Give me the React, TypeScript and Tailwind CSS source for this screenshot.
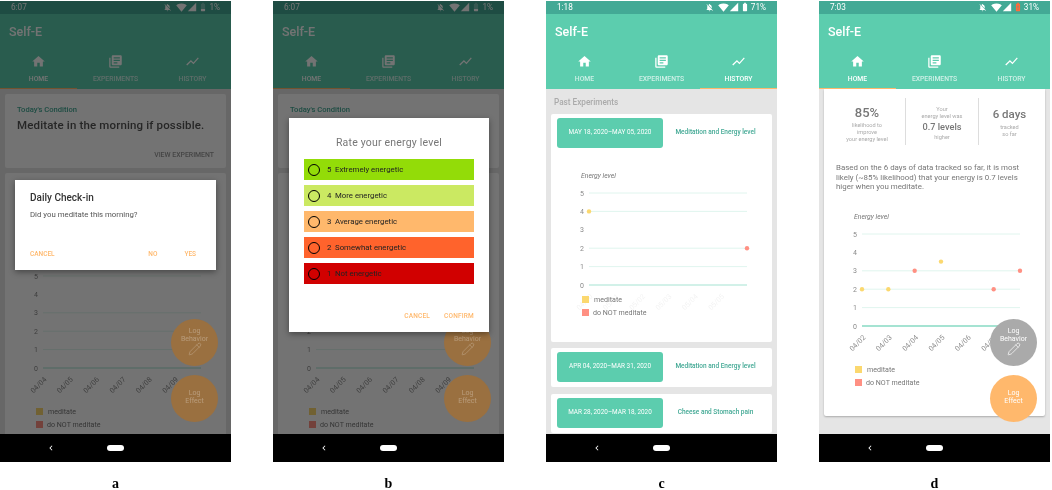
import React from "react";
import {
  MdHome,
  MdLibraryBooks,
  MdShowChart,
  MdNotificationsOff,
  MdSignalWifi4Bar,
  MdSignalCellular4Bar,
  MdBatteryFull,
  MdBattery20,
  MdBatteryAlert,
  MdChevronLeft,
} from "react-icons/md";
import { Pencil } from "lucide-react";

type Pt = [number, number, "y" | "r"];

function Chart({
  lines,
  points = [],
  labels,
  height = 151,
  labelClass = "fill-[#8a8a8a]",
  thick = false,
  title = true,
}: {
  lines: number[];
  points?: Pt[];
  labels: string[];
  height?: number;
  labelClass?: string;
  thick?: boolean;
  title?: boolean;
}) {
  const x0 = 38;
  const x1 = 196;
  const top = 27;
  const step = 18.4;
  const yOf = (v: number) => top + (5 - v) * step;
  const xOf = (i: number) => x0 + i * ((x1 - x0) / 6);
  return (
    <svg width={221} height={height} className="block overflow-visible">
      {title && (
        <text x={30} y={12} fontSize={6.8} fontStyle="italic" fill="#777">
          Energy level
        </text>
      )}
      {[5, 4, 3, 2, 1, 0].map((v) => (
        <text key={v} x={33} y={yOf(v) + 2.5} fontSize={7} textAnchor="end" fill="#8a8a8a">
          {v}
        </text>
      ))}
      {lines.map((v) => (
        <line
          key={v}
          x1={x0}
          x2={x1}
          y1={yOf(v)}
          y2={yOf(v)}
          stroke={v === 0 ? "#a5e3d2" : "#d8f2ea"}
          strokeWidth={v === 0 ? (thick ? 2 : 1) : 0.8}
        />
      ))}
      {labels.map((l, i) => (
        <text
          key={l}
          x={xOf(i) + 4}
          y={yOf(0) + 12}
          fontSize={7.2}
          textAnchor="end"
          className={labelClass}
          transform={`rotate(-45 ${xOf(i) + 4} ${yOf(0) + 12})`}
        >
          {l}
        </text>
      ))}
      {points.map(([i, v, c], k) => (
        <circle key={k} cx={xOf(i)} cy={yOf(v)} r={2.2} fill={c === "y" ? "#fbd86f" : "#ff9083"} />
      ))}
    </svg>
  );
}

function Legend({ className = "" }: { className?: string }) {
  return (
    <div className={`flex flex-col text-[7.1px] leading-[13px] text-[#777] ${className}`}>
      <div className="flex items-center gap-[5px] pl-[31px]">
        <span className="w-[7px] h-[7px] bg-[#fbd86f]" />
        <span>meditate</span>
      </div>
      <div className="flex items-center gap-[4px] pl-[31px]">
        <span className="w-[7px] h-[7px] bg-[#ff9083]" />
        <span>do NOT meditate</span>
      </div>
    </div>
  );
}

function Fabs({ variant }: { variant: "dim" | "grey" }) {
  const dim = variant === "dim";
  const text = dim ? "text-white/30" : "text-white";
  return (
    <>
      <div
        className={`absolute left-[171px] top-[318px] w-[47px] h-[47px] rounded-full flex flex-col items-center pt-[9px] text-[7px] leading-[7.5px] text-center ${text} ${
          dim ? "bg-[#9a7040]" : "bg-[#aaaaaa]"
        }`}
      >
        <span>Log</span>
        <span>Behavior</span>
        <Pencil size={14} strokeWidth={1.2} className="-mt-[1px]" />
      </div>
      <div
        className={`absolute left-[171px] top-[374px] w-[47px] h-[47px] rounded-full flex flex-col items-center justify-center pb-[2px] text-[7px] leading-[7.5px] text-center ${text} ${
          dim ? "bg-[#9a7040]" : "bg-[#ffb86c]"
        }`}
      >
        <span>Log</span>
        <span>Effect</span>
      </div>
    </>
  );
}

function Phone({
  time,
  battery,
  BatteryIcon,
  batteryClass = "",
  active,
  body,
  overlay,
  fabs,
}: {
  time: string;
  battery: string;
  BatteryIcon: React.ComponentType<{ size?: number; className?: string }>;
  batteryClass?: string;
  active: number;
  body: React.ReactNode;
  overlay?: React.ReactNode;
  fabs?: React.ReactNode;
}) {
  const tabs: [string, React.ComponentType<{ size?: number }>][] = [
    ["HOME", MdHome],
    ["EXPERIMENTS", MdLibraryBooks],
    ["HISTORY", MdShowChart],
  ];
  return (
    <div className="relative shrink-0 w-[231px] h-[461px] flex flex-col overflow-hidden bg-[#e5e5e5]">
      <div className="h-[13px] shrink-0 bg-[#43a995] flex items-center justify-between pl-[11px] pr-[11px] text-white text-[8.2px]">
        <span>{time}</span>
        <div className="flex items-center">
          <MdNotificationsOff size={9} className="mr-[4px]" />
          <MdSignalWifi4Bar size={11} />
          <MdSignalCellular4Bar size={10} className="mr-[1px]" />
          <BatteryIcon size={10} className={batteryClass} />
          <span className="ml-[1px]">{battery}</span>
        </div>
      </div>
      <div className="h-[34px] shrink-0 bg-[#5ccdae] flex items-center pl-[9px] pt-[3px] text-white text-[12.5px] font-medium">
        Self-E
      </div>
      <div className="h-[41px] shrink-0 bg-[#5ccdae] grid grid-cols-3">
        {tabs.map(([t, Icon], i) => (
          <div
            key={t}
            className={`flex flex-col items-center justify-start pt-[6px] border-b-[1px] text-[6.8px] font-medium ${
              i === active ? "border-[#ffb86c] text-white" : "border-transparent text-white/70"
            }`}
          >
            <span className="text-white h-[14px] flex items-center">
              <Icon size={15} />
            </span>
            <span className="mt-[6px] leading-[10px]">{t}</span>
          </div>
        ))}
      </div>
      <div className="h-[345px] shrink-0 overflow-hidden">{body}</div>
      <div className="h-[28px] shrink-0 bg-black flex items-center text-white">
        <MdChevronLeft size={10} className="ml-[46px]" />
        <span className="ml-[51px] w-[17px] h-[6px] rounded-full bg-white" />
      </div>
      {overlay && <div className="absolute inset-x-0 top-0 h-[433px] bg-black/55" />}
      {fabs}
      {overlay}
    </div>
  );
}

function HomeBody({ dates }: { dates: string[] }) {
  return (
    <div className="px-[5px] pt-[5px] flex flex-col gap-[5px]">
      <div className="h-[74px] shrink-0 bg-white rounded-[2px] pl-[12px] pr-[12px] pt-[11px] relative flex flex-col">
        <span className="text-[7.6px] leading-[10px] text-[#43a995] font-medium">Today's Condition</span>
        <span className="text-[11.5px] leading-[16px] mt-[2px] font-medium text-[#555] whitespace-nowrap tracking-[0.15px]">
          Meditate in the morning if possible.
        </span>
        <span className="mt-[17px] self-end text-[6.9px] text-[#999] font-medium leading-[10px]">VIEW EXPERIMENT</span>
      </div>
      <div className="h-[270px] shrink-0 bg-white rounded-[2px] pt-[76px]">
        <Chart lines={[5, 3, 2, 1, 0]} labels={dates} title={false} />
        <Legend className="mt-[5px]" />
      </div>
    </div>
  );
}

const Pill = ({ date, name }: { date: string; name: string }) => (
  <div className="flex items-center">
    <div className="w-[106px] h-[30px] ml-[6px] rounded-[3px] bg-[#5ccdae] text-white text-[6.4px] flex items-center justify-center whitespace-nowrap">
      {date}
    </div>
    <div className="flex-1 pr-[4px] text-center text-[6.5px] font-medium text-[#43a995] whitespace-nowrap">{name}</div>
  </div>
);

function HistoryBody() {
  return (
    <div className="px-[5px] flex flex-col">
      <div className="h-[25px] shrink-0 flex items-center pl-[3px] pt-[2px] text-[8.2px] font-medium text-[#aaa]">Past Experiments</div>
      <div className="h-[228px] shrink-0 bg-white rounded-[2px] pt-[4px]">
        <Pill date="MAY 18, 2020–MAY 05, 2020" name="Meditation and Energy level" />
        <div className="mt-[18px]">
          <Chart
            lines={[5, 4, 2, 1, 0]}
            points={[
              [0, 4, "y"],
              [6, 2, "r"],
            ]}
            labels={["04/30", "05/01", "05/02", "05/03", "05/04", "05/05"]}
            height={126}
            labelClass="fill-[#f3f3f3]"
          />
        </div>
        <Legend className="mt-[1px]" />
      </div>
      <div className="h-[39px] shrink-0 mt-[6px] bg-white rounded-[2px] pt-[4px]">
        <Pill date="APR 04, 2020–MAR 31, 2020" name="Meditation and Energy level" />
      </div>
      <div className="h-[39px] shrink-0 mt-[7px] bg-white rounded-[2px] pt-[4px]">
        <Pill date="MAR 28, 2020–MAR 18, 2020" name="Cheese and Stomach pain" />
      </div>
    </div>
  );
}

function DetailBody() {
  return (
    <div className="px-[5px]">
      <div className="h-[327px] bg-white rounded-b-[2px] shadow-[0_1px_2px_rgba(0,0,0,0.25)] text-[#777]">
        <div className="grid grid-cols-[81px_74px_1fr] pt-[9px] h-[66px] text-center text-[5.6px] leading-[7px] text-[#aaa]">
          <div className="flex flex-col items-center pt-[7px] pl-[5px]">
            <span className="text-[13px] leading-[16px] text-[#777] font-medium mb-[1px]">85%</span>
            <span>likelihood to</span>
            <span>improve</span>
            <span>your energy level</span>
          </div>
          <div className="flex flex-col items-center border-x border-[#ddd] pt-[8px] h-[47px]">
            <span>Your</span>
            <span>energy level was</span>
            <span className="text-[9.2px] leading-[12px] font-medium text-[#777] my-[1px]">0.7 levels</span>
            <span>higher</span>
          </div>
          <div className="flex flex-col items-center pt-[8px] pr-[5px]">
            <span className="text-[11.5px] leading-[16px] text-[#777] font-medium mb-[2px]">6 days</span>
            <span>tracked</span>
            <span>so far</span>
          </div>
        </div>
        <p className="pl-[12px] text-[7.9px] leading-[9.5px] text-[#777] whitespace-nowrap mt-[8px]">
          Based on the 6 days of data tracked so far, it is most
          <br />
          likely (~85% likelihood) that your energy is 0.7 levels
          <br />
          higer when you meditate.
        </p>
        <div className="mt-[15px]">
          <Chart
            lines={[5, 3, 2, 1, 0]}
            thick
            points={[
              [0, 2, "y"],
              [1, 2, "y"],
              [2, 3, "r"],
              [3, 3.5, "y"],
              [5, 2, "r"],
              [6, 3, "r"],
            ]}
            labels={["04/02", "04/03", "04/04", "04/05", "04/06", "04/07"]}
          />
        </div>
        <Legend className="mt-[5px]" />
      </div>
    </div>
  );
}

function CheckIn() {
  return (
    <div className="absolute left-[15px] top-[179px] w-[201px] h-[90px] bg-white shadow-[0_2px_6px_rgba(0,0,0,0.4)] pl-[15px] pr-[20px] pt-[11px] flex flex-col">
      <span className="text-[10px] leading-[13px] font-medium text-[#333]">Daily Check-in</span>
      <span className="text-[7.8px] leading-[10px] mt-[6px] text-[#555]">Did you meditate this morning?</span>
      <div className="mt-[30px] flex text-[6.5px] font-medium text-[#ffb86c]">
        <span>CANCEL</span>
        <span className="ml-auto">NO</span>
        <span className="ml-[27px]">YES</span>
      </div>
    </div>
  );
}

function Rate() {
  const opts: [string, string, string][] = [
    ["5", "Extremely energetic", "bg-[#93dc08]"],
    ["4", "More energetic", "bg-[#cbe962]"],
    ["3", "Average energetic", "bg-[#ffb86c]"],
    ["2", "Somewhat energetic", "bg-[#ff632c]"],
    ["1", "Not energetic", "bg-[#d10000]"],
  ];
  return (
    <div className="absolute left-[16px] top-[117px] w-[200px] h-[214px] bg-white shadow-[0_2px_6px_rgba(0,0,0,0.4)] px-[15px] pt-[18px] flex flex-col">
      <div className="text-center text-[10.5px] leading-[14px] text-[#777] tracking-[0.2px]">Rate your energy level</div>
      <div className="mt-[9px] flex flex-col gap-[5px]">
        {opts.map(([n, t, c]) => (
          <div key={n} className={`h-[21px] flex items-center pl-[4px] text-[7.8px] text-[#222] ${c}`}>
            <span className="w-[12px] h-[12px] rounded-full border border-black" />
            <span className="ml-[7px] w-[8px]">{n}</span>
            <span>{t}</span>
          </div>
        ))}
      </div>
      <div className="mt-[28px] flex justify-end text-[6.5px] font-medium text-[#ffb86c] tracking-[0.2px]">
        <span>CANCEL</span>
        <span className="ml-[14px]">CONFIRM</span>
      </div>
    </div>
  );
}

export default function App() {
  const dates = ["04/04", "04/05", "04/06", "04/07", "04/08", "04/09"];
  const screens = [
    {
      cap: "a",
      el: (
        <Phone time="6:07" battery="1%" BatteryIcon={MdBattery20} active={0} body={<HomeBody dates={dates} />} fabs={<Fabs variant="dim" />} overlay={<CheckIn />} />
      ),
    },
    {
      cap: "b",
      el: (
        <Phone time="6:07" battery="1%" BatteryIcon={MdBattery20} active={0} body={<HomeBody dates={dates} />} fabs={<Fabs variant="dim" />} overlay={<Rate />} />
      ),
    },
    {
      cap: "c",
      el: <Phone time="1:18" battery="71%" BatteryIcon={MdBatteryFull} active={2} body={<HistoryBody />} />,
    },
    {
      cap: "d",
      el: (
        <Phone time="7:03" battery="31%" BatteryIcon={MdBatteryAlert} batteryClass="text-[#ff6a3c]" active={0} body={<DetailBody />} fabs={<Fabs variant="grey" />} />
      ),
    },
  ];
  return (
    <div className="w-[1052px] h-[490px] bg-white overflow-hidden pt-[1px] font-['Roboto',sans-serif] flex gap-[42px] blur-[0.3px]">
      {screens.map((s) => (
        <div key={s.cap} className="w-[231px] flex flex-col items-center">
          {s.el}
          <div className="shrink-0 mt-[15px] text-[14px] leading-[13px] font-bold text-black font-['Liberation_Serif',serif]">{s.cap}</div>
        </div>
      ))}
    </div>
  );
}
